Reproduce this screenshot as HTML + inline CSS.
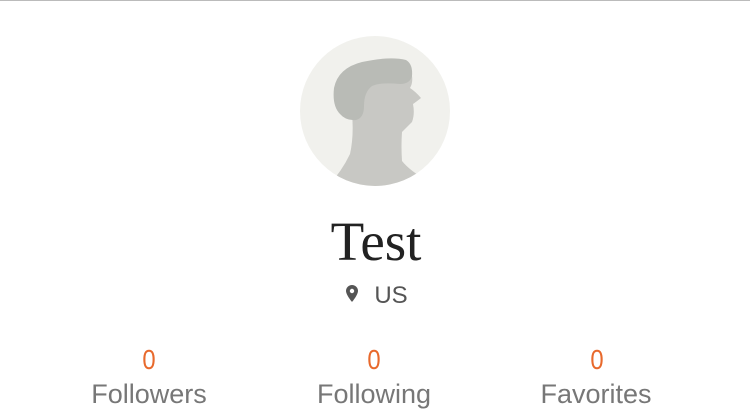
<!DOCTYPE html>
<html><head><style>
body{margin:0;width:750px;height:410px;background:#fff;overflow:hidden;position:relative;font-family:"Liberation Sans",sans-serif}
.top{position:absolute;left:0;top:0;width:750px;height:1px;background:#bbb}
.t{position:absolute;white-space:nowrap;transform:translateX(-50%)}
</style></head><body>
<div class="top"></div>
<svg style="position:absolute;left:300px;top:36px" width="150" height="150" viewBox="0 0 150 150">
<defs><clipPath id="c"><circle cx="75" cy="75" r="75"/></clipPath></defs>
<circle cx="75" cy="75" r="75" fill="#f1f1ed"/>
<g clip-path="url(#c)">
<path d="M28 150 Q42 135 50 118 Q54 100 52 78 Q45 60 47 40 Q60 28 90 26 Q108 27 112 40 Q113 47 110 52 Q116 56 121 62 Q116 66 113 68 Q115 78 112 86 Q106 92 102 96 Q101 110 102 125 Q110 135 128 145 L128 150 Z" fill="#c8c8c4"/>
<path d="M40 78 Q32 70 34 52 Q38 32 62 26 Q90 20 106 24 Q113 28 112 40 Q110 48 100 48 Q80 46 72 50 Q64 56 64 70 Q64 82 56 84 Q46 85 40 78 Z" fill="#b9bbb6"/>
</g>
</svg>
<div class="t" style="left:376px;top:212px;font-family:'Liberation Serif',serif;font-size:55px;color:#222;line-height:60px">Test</div>
<svg style="position:absolute;left:346px;top:285px" width="12" height="17" viewBox="0 0 12 17"><path d="M6 0C2.7 0 0 2.6 0 5.9 0 10 6 17 6 17S12 10 12 5.9C12 2.6 9.3 0 6 0Z" fill="#555"/><circle cx="6" cy="6" r="2.2" fill="#fff"/></svg>
<div class="t" style="left:391px;top:282px;font-size:24px;color:#555;line-height:28px">US</div>
<div class="t" style="left:149px;top:345px;font-size:28px;color:#e8692c;line-height:30px;transform:translateX(-50%) scaleX(0.85)">0</div>
<div class="t" style="left:374px;top:345px;font-size:28px;color:#e8692c;line-height:30px;transform:translateX(-50%) scaleX(0.85)">0</div>
<div class="t" style="left:597px;top:345px;font-size:28px;color:#e8692c;line-height:30px;transform:translateX(-50%) scaleX(0.85)">0</div>
<div class="t" style="left:149px;top:379px;font-size:27px;color:#777;line-height:30px">Followers</div>
<div class="t" style="left:374px;top:379px;font-size:27px;color:#777;line-height:30px">Following</div>
<div class="t" style="left:596px;top:379px;font-size:27px;color:#777;line-height:30px">Favorites</div>
</body></html>
